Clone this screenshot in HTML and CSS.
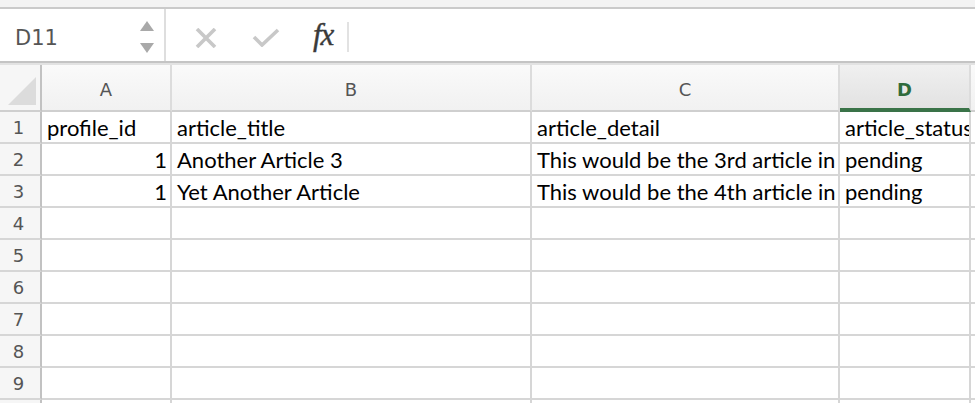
FILE: index.html
```html
<!DOCTYPE html>
<html>
<head>
<meta charset="utf-8">
<link rel="stylesheet" href="styles.css">
</head>
<body>
<div class="topstrip"></div>
<div class="toolbar">
  <div class="namebox">
    <span class="ref">D11</span>
    <div class="spinner">
      <svg width="14" height="32" viewBox="0 0 14 32"><polygon points="7,0 14,10 0,10" fill="#a9a9a9"/><polygon points="0,22 14,22 7,32" fill="#a9a9a9"/></svg>
    </div>
  </div>
  <div class="formula-tools">
    <svg class="ic-x" width="22" height="20" viewBox="0 0 22 20"><path d="M2 1 L20 19 M20 1 L2 19" stroke="#c8c8c8" stroke-width="3.6" fill="none"/></svg>
    <svg class="ic-check" width="28" height="19" viewBox="0 0 28 19"><path d="M2 9 L10 17 L26 2" stroke="#c8c8c8" stroke-width="3.6" fill="none"/></svg>
    <span class="fx">fx</span>
    <span class="fbar"></span>
  </div>
</div>
<div class="sheet">
  <div class="hdr corner"><span class="tri"></span></div>
  <div class="hdr">A</div>
  <div class="hdr">B</div>
  <div class="hdr">C</div>
  <div class="hdr active">D</div>
  <div class="hdr edge"></div>

  <div class="rn">1</div><div class="c">profile_id</div><div class="c">article_title</div><div class="c">article_detail</div><div class="c">article_status</div><div class="c edge"></div>
  <div class="rn">2</div><div class="c num">1</div><div class="c">Another Article 3</div><div class="c">This would be the 3rd article in</div><div class="c">pending</div><div class="c edge"></div>
  <div class="rn">3</div><div class="c num">1</div><div class="c">Yet Another Article</div><div class="c">This would be the 4th article in</div><div class="c">pending</div><div class="c edge"></div>
  <div class="rn">4</div><div class="c"></div><div class="c"></div><div class="c"></div><div class="c"></div><div class="c edge"></div>
  <div class="rn">5</div><div class="c"></div><div class="c"></div><div class="c"></div><div class="c"></div><div class="c edge"></div>
  <div class="rn">6</div><div class="c"></div><div class="c"></div><div class="c"></div><div class="c"></div><div class="c edge"></div>
  <div class="rn">7</div><div class="c"></div><div class="c"></div><div class="c"></div><div class="c"></div><div class="c edge"></div>
  <div class="rn">8</div><div class="c"></div><div class="c"></div><div class="c"></div><div class="c"></div><div class="c edge"></div>
  <div class="rn">9</div><div class="c"></div><div class="c"></div><div class="c"></div><div class="c"></div><div class="c edge"></div>
  <div class="rn"></div><div class="c"></div><div class="c"></div><div class="c"></div><div class="c"></div><div class="c edge"></div>
</div>
</body>
</html>
```
FILE: styles.css
```css
html, body {
  margin: 0;
  padding: 0;
  background: #ffffff;
  overflow: hidden;
}
body {
  width: 975px;
  height: 403px;
  font-family: "DejaVu Sans", sans-serif;
}
.topstrip {
  height: 7px;
  background: #f3f3f3;
  border-bottom: 2px solid #cacaca;
}
.toolbar {
  height: 52px;
  display: flex;
  background: #ffffff;
  border-bottom: 2px solid #c4c4c4;
}
.namebox {
  width: 166px;
  border-right: 2px solid #dedede;
  display: flex;
  align-items: center;
  justify-content: space-between;
  box-sizing: border-box;
  padding: 0 10px 0 15px;
}
.ref {
  font-size: 21px;
  color: #555555;
  padding-top: 6px;
}
.spinner {
  display: flex;
  padding-top: 4px;
}
.formula-tools {
  display: flex;
  align-items: center;
  flex: 1;
  padding-left: 29px;
}
.ic-x { margin-top: 5px; }
.ic-check { margin-left: 35px; margin-top: 5px; }
.fx {
  font-family: "Liberation Serif", serif;
  font-style: italic;
  font-size: 31px;
  color: #3a3a3a;
  margin-left: 33px;
  padding-top: 0;
  letter-spacing: -1px;
  -webkit-text-stroke: 0.4px #3a3a3a;
}
.fbar {
  width: 2px;
  height: 30px;
  background: #e2e2e2;
  margin-left: 14px;
  margin-top: 4px;
}
.sheet {
  display: grid;
  grid-template-columns: 42px 130px 360px 308px 131px 1fr;
  grid-template-rows: 47px;
  grid-auto-rows: 32px;
  border-top: 2px solid #e2e2e2;
}
.hdr {
  background: linear-gradient(#fafafa, #f1f1f1);
  border-right: 2px solid #dcdcdc;
  border-bottom: 2px solid #cfcfcf;
  display: flex;
  align-items: center;
  justify-content: center;
  font-size: 18px;
  color: #555555;
  padding-top: 4px;
  box-sizing: border-box;
}
.hdr.corner {
  position: relative;
  border-right-color: #c2c2c2;
  background: #f6f6f6;
}
.tri {
  position: absolute;
  left: 8px;
  bottom: 5px;
  width: 0;
  height: 0;
  border-left: 28px solid transparent;
  border-bottom: 28px solid #dcdcdc;
}
.hdr.active {
  background: linear-gradient(#f0f0f0, #e2e2e2);
  color: #2f6b3c;
  font-weight: bold;
  border-bottom: 4px solid #3a7348;
  padding-top: 6px;
}
.hdr.edge {
  border-right: none;
}
.rn {
  background: #f6f6f6;
  border-right: 2px solid #c2c2c2;
  border-bottom: 2px solid #d6d6d6;
  display: flex;
  align-items: center;
  justify-content: center;
  font-size: 18px;
  color: #555555;
  box-sizing: border-box;
  padding-right: 3px;
}
.c {
  border-right: 2px solid #d6d6d6;
  border-bottom: 2px solid #d6d6d6;
  box-sizing: border-box;
  font-family: "Lato", sans-serif;
  font-size: 22px;
  color: #000000;
  padding: 0 3px 0 5px;
  display: flex;
  align-items: center;
  white-space: nowrap;
  overflow: hidden;
}
.c.num {
  justify-content: flex-end;
}
.c.edge {
  border-right: none;
}
```
